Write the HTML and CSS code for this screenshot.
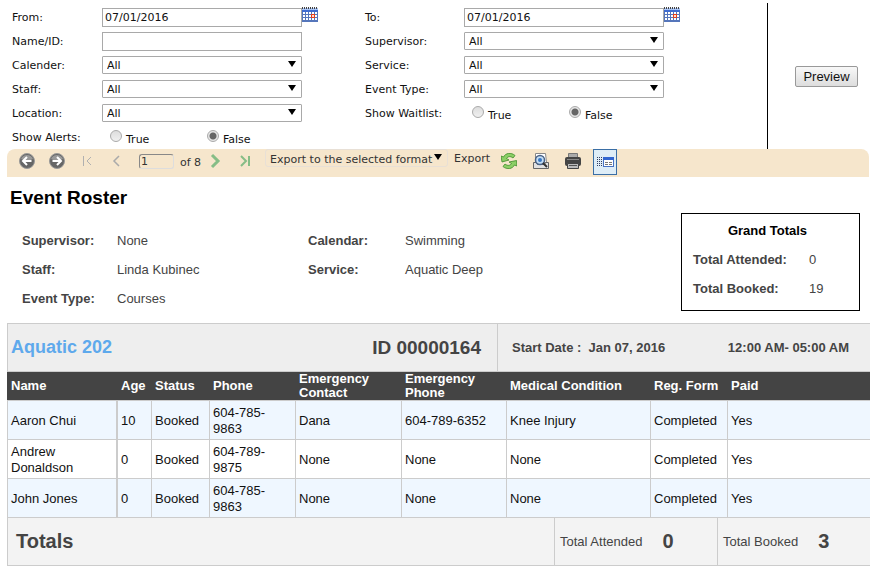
FILE: index.html
```
<!DOCTYPE html>
<html lang="en">
<head>
    <meta charset="UTF-8">
    <meta name="viewport" content="width=device-width, initial-scale=1.0">
    <title>Event Roster</title>
    <link rel="stylesheet" href="styles.css">
</head>
<body>
    <!-- shared icon shapes -->
    <svg class="sprite" aria-hidden="true">
        <symbol id="calendar" viewBox="0 0 16 15">
            <rect x="0" y="1" width="16" height="14" fill="#5576bb"/>
            <rect x="0" y="1" width="16" height="2" fill="#a9c4f5"/>
            <rect x="0" y="3" width="16" height="2" fill="#3f6cd0"/>
            <path d="M.5 0v2M2.500 0v2M4.500 0v2M6.500 0v2M8.500 0v2M10.500 0v2M12.500 0v2M14.500 0v2" stroke="#444"/>
            <path d="M1 5h2v2H1zM4 5h2v2H4zM7 5h2v2H7zM10 5h2v2h-2zM13 5h2v2h-2zM1 8h2v2H1zM4 8h2v2H4zM7 8h2v2H7zM10 8h2v2h-2zM13 8h2v2h-2zM1 11h2v2H1zM4 11h2v2H4zM7 11h2v2H7zM10 11h2v2h-2zM13 11h2v2h-2z" fill="#fff"/>
            <rect x="9" y="7" width="4" height="4" fill="#e8401a"/>
            <rect x="10" y="8" width="2" height="2" fill="#ffe0d5"/>
        </symbol>
        <symbol id="round-arrow" viewBox="0 0 16 16">
            <circle cx="8" cy="8" r="7.500" fill="#666" stroke="#999"/>
            <path d="M2 6a6.500 6.500 0 0 1 12 0q-6 3-12 0z" fill="#999"/>
            <path d="M12.500 8H4.500M8 4L4 8l4 4" fill="none" stroke="#fff" stroke-width="2"/>
        </symbol>
    </svg>

    <form class="filter-area">
        <div class="filters">
            <div class="filter-column">
                <div class="filter-row">
                    <label for="from">From:</label>
                    <input class="field" type="text" id="from" value="07/01/2016">
                    <button class="date-button" type="button" aria-label="Pick from date"><svg><use href="#calendar"/></svg></button>
                </div>
                <div class="filter-row">
                    <label for="name">Name/ID:</label>
                    <input class="field" type="text" id="name">
                </div>
                <div class="filter-row">
                    <label for="calender">Calender:</label>
                    <span class="select"><select id="calender"><option>All</option></select></span>
                </div>
                <div class="filter-row">
                    <label for="staff">Staff:</label>
                    <span class="select"><select id="staff"><option>All</option></select></span>
                </div>
                <div class="filter-row">
                    <label for="location">Location:</label>
                    <span class="select"><select id="location"><option>All</option></select></span>
                </div>
                <div class="filter-row" role="radiogroup" aria-labelledby="alertsLabel">
                    <span class="row-label" id="alertsLabel">Show Alerts:</span>
                    <label class="radio"><input type="radio" name="alerts"><span>True</span></label>
                    <label class="radio"><input type="radio" name="alerts" checked><span>False</span></label>
                </div>
            </div>
            <div class="filter-column wide">
                <div class="filter-row">
                    <label for="to">To:</label>
                    <input class="field" type="text" id="to" value="07/01/2016">
                    <button class="date-button" type="button" aria-label="Pick to date"><svg><use href="#calendar"/></svg></button>
                </div>
                <div class="filter-row">
                    <label for="supervisor">Supervisor:</label>
                    <span class="select"><select id="supervisor"><option>All</option></select></span>
                </div>
                <div class="filter-row">
                    <label for="service">Service:</label>
                    <span class="select"><select id="service"><option>All</option></select></span>
                </div>
                <div class="filter-row">
                    <label for="eventType">Event Type:</label>
                    <span class="select"><select id="eventType"><option>All</option></select></span>
                </div>
                <div class="filter-row" role="radiogroup" aria-labelledby="waitlistLabel">
                    <span class="row-label" id="waitlistLabel">Show Waitlist:</span>
                    <label class="radio"><input type="radio" name="waitlist"><span>True</span></label>
                    <label class="radio"><input type="radio" name="waitlist" checked><span>False</span></label>
                </div>
            </div>
        </div>
        <div class="actions">
            <button class="preview" type="button">Preview</button>
        </div>
    </form>

    <div class="toolbar">
        <div class="pager">
            <button type="button" aria-label="Back"><svg viewBox="0 0 16 16"><use href="#round-arrow"/></svg></button>
            <button type="button" aria-label="Forward"><svg class="flip" viewBox="0 0 16 16"><use href="#round-arrow"/></svg></button>
            <button type="button" aria-label="First page"><svg viewBox="0 0 16 16"><path d="M4.500 3v10M12 4L8 8l4 4" fill="none" stroke="#b0b0b0"/></svg></button>
            <button type="button" aria-label="Previous page"><svg viewBox="0 0 16 16"><path d="M10 3L5 8l5 5" fill="none" stroke="#aaa" stroke-width="1.500"/></svg></button>
            <input class="page-number" type="text" value="1" aria-label="Page">
        </div>
        <span class="page-count">of 8</span>
        <div class="pager">
            <button type="button" aria-label="Next page"><svg viewBox="0 0 16 16"><path d="M4 2l6 6-6 6" fill="none" stroke="#86bd86" stroke-width="3"/></svg></button>
            <button type="button" aria-label="Last page"><svg viewBox="0 0 16 16"><path d="M3 3l5 5-5 5" fill="none" stroke="#86bd86" stroke-width="2"/><path d="M11 3v10" stroke="#86bd86" stroke-width="2"/></svg></button>
        </div>
        <div class="export">
            <span class="select"><select aria-label="Export format"><option>Export to the selected format</option></select></span>
            <a href="#">Export</a>
        </div>
        <div class="tools">
            <button type="button" aria-label="Refresh">
                <svg viewBox="0 0 16 16">
                    <path d="M0 3l2.500 1C4.500 0 10-1 14 2.500L12 5C9.500 3 7 3.200 5.500 5.500L8 7l-7 2z" fill="#8ccf66" stroke="#3f8a2b" stroke-width=".8"/>
                    <path d="M16 13l-2.500-1C11.500 16 6 17 2 13.500L4 11c2.500 2 5 1.800 6.500-.5L8 9l7.500-1.500z" fill="#8ccf66" stroke="#3f8a2b" stroke-width=".8"/>
                </svg>
            </button>
            <button type="button" aria-label="Find">
                <svg viewBox="0 0 16 16">
                    <path d="M2.500.5h10l1 9h-11z" fill="#fff" stroke="#888"/>
                    <path d="M.5 9.500h3l1 2h7l1-2h3v6H.5z" fill="#e2e2e2" stroke="#666"/>
                    <circle cx="7" cy="7" r="4.500" fill="#c4def5" stroke="#4a6285" stroke-width="1.500"/>
                    <circle cx="7" cy="7" r="2" fill="#3677c4"/>
                    <path d="M10 10l4 4" stroke="#333" stroke-width="2"/>
                </svg>
            </button>
            <button type="button" aria-label="Print">
                <svg viewBox="0 0 16 16">
                    <path d="M3.500 5V.5h9V5z" fill="#aaa" stroke="#777"/>
                    <rect x="0" y="4" width="16" height="9" rx="2" fill="#444"/>
                    <path d="M2 6.500h12" stroke="#888"/>
                    <path d="M2.500 10.500h11v5h-11z" fill="#bbb" stroke="#444"/>
                    <path d="M4 12.500h8" stroke="#555"/>
                </svg>
            </button>
        </div>
        <button class="toggle" type="button" aria-label="Toggle parameters">
            <svg viewBox="0 0 18 14">
                <path d="M1.500 2v9M3.500 2v9M5.500 2v9" stroke="#333c60" stroke-dasharray="1 1"/>
                <rect x="7.500" y="2.500" width="10" height="9" fill="#fff" stroke="#4773c4"/>
                <path d="M7 3.500h11" stroke="#3266d0" stroke-width="3"/>
                <path d="M9 7.500h3M13 7.500h3M9 9.500h3M13 9.500h3" stroke="#777"/>
            </svg>
        </button>
    </div>

    <h1>Event Roster</h1>

    <div class="summary">
        <dl class="details">
            <dt>Supervisor:</dt><dd>None</dd>
            <dt>Calendar:</dt><dd>Swimming</dd>
            <dt>Staff:</dt><dd>Linda Kubinec</dd>
            <dt>Service:</dt><dd>Aquatic Deep</dd>
            <dt>Event Type:</dt><dd>Courses</dd>
        </dl>
        <div class="grand-totals">
            <h2>Grand Totals</h2>
            <dl>
                <dt>Total Attended:</dt><dd>0</dd>
                <dt>Total Booked:</dt><dd>19</dd>
            </dl>
        </div>
    </div>

    <div class="event-header">
        <div class="event-name">
            <a href="#">Aquatic 202</a>
            <span class="event-id">ID 00000164</span>
        </div>
        <div class="event-time">
            <span>Start Date : &nbsp;Jan 07, 2016</span>
            <span>12:00 AM- 05:00 AM</span>
        </div>
    </div>

    <table class="roster">
        <colgroup>
            <col class="col-name">
            <col class="col-age">
            <col class="col-status">
            <col class="col-phone">
            <col class="col-contact">
            <col class="col-contact-phone">
            <col class="col-medical">
            <col class="col-form">
            <col>
        </colgroup>
        <thead>
            <tr>
                <th>Name</th>
                <th>Age</th>
                <th>Status</th>
                <th>Phone</th>
                <th>Emergency Contact</th>
                <th>Emergency Phone</th>
                <th>Medical Condition</th>
                <th>Reg. Form</th>
                <th>Paid</th>
            </tr>
        </thead>
        <tbody>
            <tr>
                <td>Aaron Chui</td>
                <td>10</td>
                <td>Booked</td>
                <td>604-785-9863</td>
                <td>Dana</td>
                <td>604-789-6352</td>
                <td>Knee Injury</td>
                <td>Completed</td>
                <td>Yes</td>
            </tr>
            <tr>
                <td>Andrew Donaldson</td>
                <td>0</td>
                <td>Booked</td>
                <td>604-789-9875</td>
                <td>None</td>
                <td>None</td>
                <td>None</td>
                <td>Completed</td>
                <td>Yes</td>
            </tr>
            <tr>
                <td>John Jones</td>
                <td>0</td>
                <td>Booked</td>
                <td>604-785-9863</td>
                <td>None</td>
                <td>None</td>
                <td>None</td>
                <td>Completed</td>
                <td>Yes</td>
            </tr>
        </tbody>
    </table>

    <div class="totals">
        <div class="totals-title">Totals</div>
        <div class="total">Total Attended <b>0</b></div>
        <div class="total">Total Booked <b>3</b></div>
    </div>
</body>
</html>
```
FILE: styles.css
```
* {
    box-sizing: border-box;
}
body {
    margin: 0;
    padding: 3px 5px 5px 7px;
    background-color: #fff;
    color: #111;
    font-family: "Liberation Sans", Arial, sans-serif;
    font-size: 13px;
}
button, input, select {
    margin: 0;
    font: inherit;
    color: inherit;
}
dl, dd, h1, h2 {
    margin: 0;
}
.sprite {
    display: none;
}

/* filters */
.filter-area {
    display: flex;
    font-family: "DejaVu Sans", Verdana, sans-serif;
    font-size: 11px;
}
.filters {
    display: flex;
    flex: 1;
    padding: 2px 0 0 5px;
    border-right: 1px solid #000;
}
.filter-column {
    width: 353px;
}
.filter-row {
    display: flex;
    align-items: center;
    height: 24px;
}
.filter-row > label:first-child, .row-label {
    width: 90px;
}
.wide .filter-row > label:first-child, .wide .row-label {
    width: 99px;
}
.field {
    width: 200px;
    height: 19px;
    padding: 1px 2px;
    border: 1px solid #a9a9a9;
    background-color: #fff;
}
.date-button {
    align-self: flex-start;
    padding: 2px 0 0;
    border: none;
    background: none;
    line-height: 0;
}
.date-button svg {
    width: 16px;
    height: 15px;
}
.select {
    position: relative;
    display: inline-flex;
}
.select::after {
    content: "";
    position: absolute;
    top: 5px;
    right: 6px;
    border: 4px solid transparent;
    border-top: 6px solid #000;
    border-bottom: none;
    pointer-events: none;
}
.select select {
    appearance: none;
    width: 200px;
    height: 18px;
    padding: 0 4px;
    border: 1px solid #a9a9a9;
    border-radius: 1px;
    background-color: #fff;
}
.radio {
    display: flex;
    width: 97px;
    padding-left: 8px;
}
.radio input {
    appearance: none;
    width: 12px;
    height: 12px;
    margin-top: 2px;
    border: 1px solid #aaa;
    border-radius: 50%;
    background: linear-gradient(#ddd, #f0f0f0);
}
.radio input:checked {
    background: radial-gradient(circle, #666 0 3px, #e6e6e6 4px);
}
.radio span {
    padding: 5px 0 0 4px;
}
.actions {
    display: flex;
    align-items: center;
    justify-content: flex-end;
    width: 102px;
    padding-right: 12px;
}
.preview {
    width: 63px;
    height: 21px;
    padding: 0;
    border: 1px solid #999;
    border-radius: 2px;
    background: linear-gradient(#f8f8f8, #ddd);
    font-family: "Liberation Sans", Arial, sans-serif;
    font-size: 13px;
}

/* report toolbar */
.toolbar {
    display: flex;
    align-items: flex-start;
    height: 28px;
    padding-left: 12px;
    margin-right: 1px;
    border-radius: 8px 8px 0 0;
    background-color: #f6e6cc;
    color: #333;
    font-family: "DejaVu Sans", Verdana, sans-serif;
    font-size: 11px;
}
.toolbar button {
    padding: 0;
    border: none;
    background: none;
    line-height: 0;
}
.pager, .tools {
    display: flex;
    align-items: center;
    gap: 14px;
    height: 24px;
}
.pager svg, .tools svg {
    width: 16px;
    height: 16px;
}
.flip {
    transform: scaleX(-1);
}
.page-number {
    width: 35px;
    height: 15px;
    padding: 0 1px;
    border: 1px solid #ddd;
    border-top-color: #888;
    border-left-color: #888;
    border-radius: 3px;
    background: none;
}
.page-count {
    padding: 0 7px 0 6px;
    line-height: 28px;
}
.export {
    display: flex;
    gap: 6px;
    padding: 0 11px;
    line-height: 20px;
}
.export .select {
    align-self: flex-start;
}
.export a {
    color: inherit;
    text-decoration: none;
}
.export .select select {
    width: 183px;
    border-color: #e8e0d6;
    border-radius: 3px;
    background: none;
}
.tools {
    gap: 16px;
    padding-right: 12px;
}
.toolbar .toggle {
    width: 24px;
    height: 26px;
    padding: 0 2px;
    border: 1px solid #3a6ea5;
    background-color: #deedf7;
}
.toggle svg {
    width: 18px;
    height: 14px;
}

/* report heading */
h1 {
    padding: 9px 3px 3px;
    color: #000;
    font-size: 19px;
    line-height: 24px;
}
.summary {
    display: flex;
    align-items: flex-start;
    justify-content: space-between;
    padding: 0 10px 12px 0;
    color: #444;
    line-height: 29px;
}
.details {
    display: grid;
    grid-template-columns: 95px 191px 97px auto;
    padding: 13px 0 0 15px;
    margin-bottom: -3px;
}
dt {
    font-weight: bold;
}
.grand-totals {
    width: 179px;
    padding: 2px 11px 7px;
    border: 1px solid #000;
}
.grand-totals h2 {
    padding-right: 6px;
    color: #000;
    font-size: 13px;
    text-align: center;
}
.grand-totals dl {
    display: grid;
    grid-template-columns: 116px 1fr;
}

/* event block */
.event-header {
    display: grid;
    grid-template-columns: 1fr 373px;
    height: 49px;
    border-top: 1px solid #ccc;
    border-left: 1px solid #ccc;
    border-bottom: 1px solid #ccc;
    background-color: #eee;
    color: #444;
    font-weight: bold;
}
.event-name, .event-time {
    display: flex;
    align-items: center;
    justify-content: space-between;
}
.event-name {
    padding: 0 16px 0 3px;
}
.event-name a {
    color: #5ea9ec;
    font-size: 18px;
    text-decoration: none;
}
.event-id {
    font-size: 19px;
}
.event-time {
    padding: 0 21px 0 14px;
    border-left: 1px solid #ccc;
}
.roster {
    width: 100%;
    table-layout: fixed;
    border-spacing: 0;
}
.col-name { width: 110px; }
.col-age { width: 34px; }
.col-status { width: 58px; }
.col-phone { width: 86px; }
.col-contact { width: 106px; }
.col-contact-phone { width: 105px; }
.col-medical { width: 144px; }
.col-form { width: 77px; }
.roster th {
    height: 28px;
    padding: 0 4px;
    background-color: #444;
    color: #fff;
    line-height: 14px;
    text-align: left;
}
.roster td {
    height: 39px;
    padding: 3px 6px 2px 3px;
    border-top: 1px solid #ccc;
    border-left: 1px solid #ccc;
    line-height: 16px;
}
.roster td:first-child {
    border-right: 1px solid #ccc;
}
.roster tbody tr:nth-child(odd) {
    background-color: #eff7ff;
}
.totals {
    display: grid;
    grid-template-columns: 1fr 163px 153px;
    height: 49px;
    border: 1px solid #ccc;
    border-right: none;
    background-color: #f3f3f3;
    color: #444;
}
.totals-title {
    padding-left: 8px;
    font-size: 20px;
    font-weight: bold;
    line-height: 47px;
}
.total {
    display: flex;
    align-items: center;
    gap: 20px;
    padding-left: 5px;
    border-left: 1px solid #ccc;
}
.total b {
    font-size: 20px;
}
```
